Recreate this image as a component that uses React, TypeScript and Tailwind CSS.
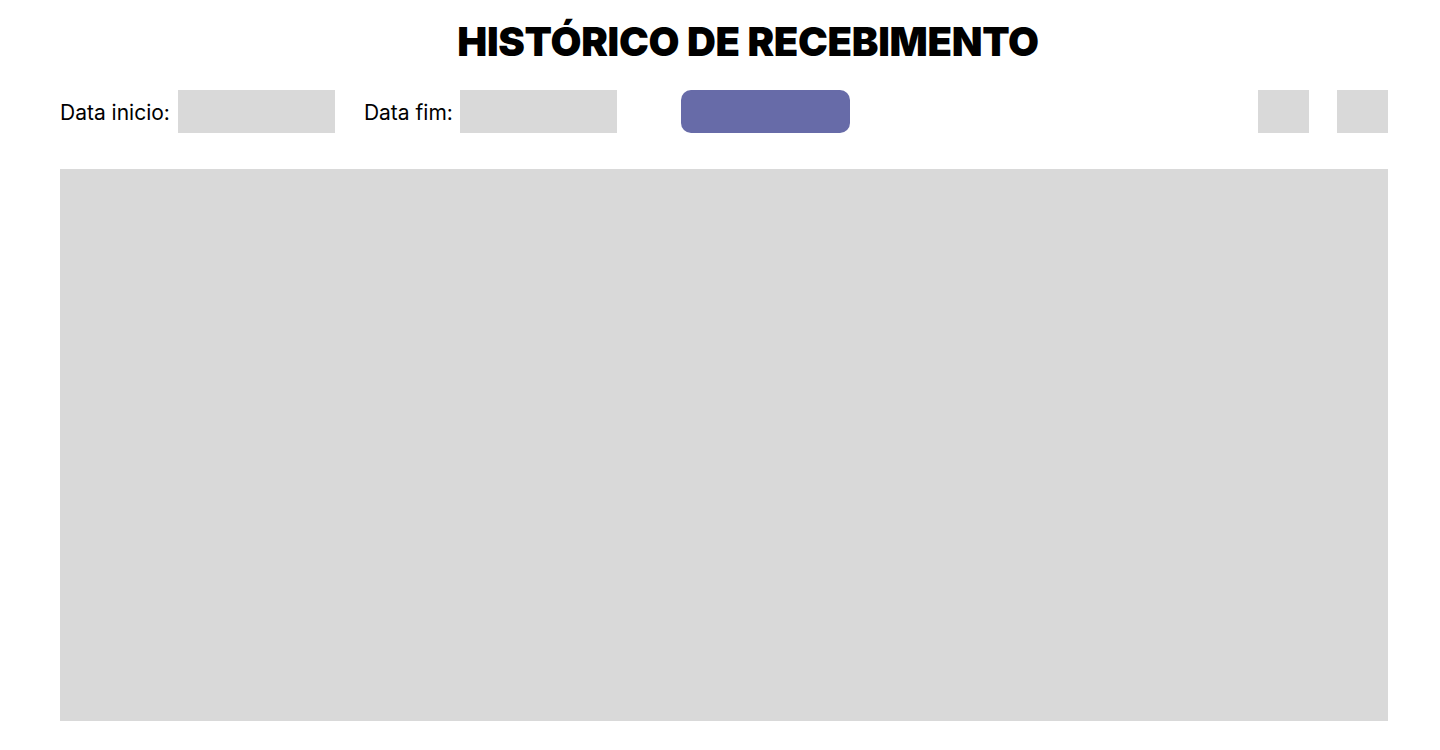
import React from 'react';

export default function App() {
  return (
    <div className="min-h-screen w-full bg-white pl-[60px] pr-[52px] font-['Inter',sans-serif] text-black">
      {/* Title */}
      <h1 className="pl-[48px] pt-[16px] text-center text-[40px] font-black leading-[52px] tracking-[-0.3px]">
        HISTÓRICO DE RECEBIMENTO
      </h1>

      {/* Filters */}
      <div className="mt-[22px] flex h-[43px] items-center">
        <label className="flex items-center text-[21px]">
          <span className="mr-[8px] pt-[3px]">Data inicio:</span>
          <input className="h-[43px] w-[157px] bg-[#d9d9d9] outline-none" />
        </label>
        <label className="ml-[29px] flex items-center text-[21px]">
          <span className="mr-[7px] pt-[3px]">Data fim:</span>
          <input className="h-[43px] w-[157px] bg-[#d9d9d9] outline-none" />
        </label>
        <button className="ml-[64px] h-[43px] w-[169px] rounded-[10px] bg-[#676ba8]" />
        <div className="ml-auto flex gap-[28px]">
          <button className="h-[43px] w-[51px] bg-[#d9d9d9]" />
          <button className="h-[43px] w-[51px] bg-[#d9d9d9]" />
        </div>
      </div>

      {/* Table area */}
      <div className="mt-[36px] h-[552px] w-full bg-[#d9d9d9]" />
    </div>
  );
}
